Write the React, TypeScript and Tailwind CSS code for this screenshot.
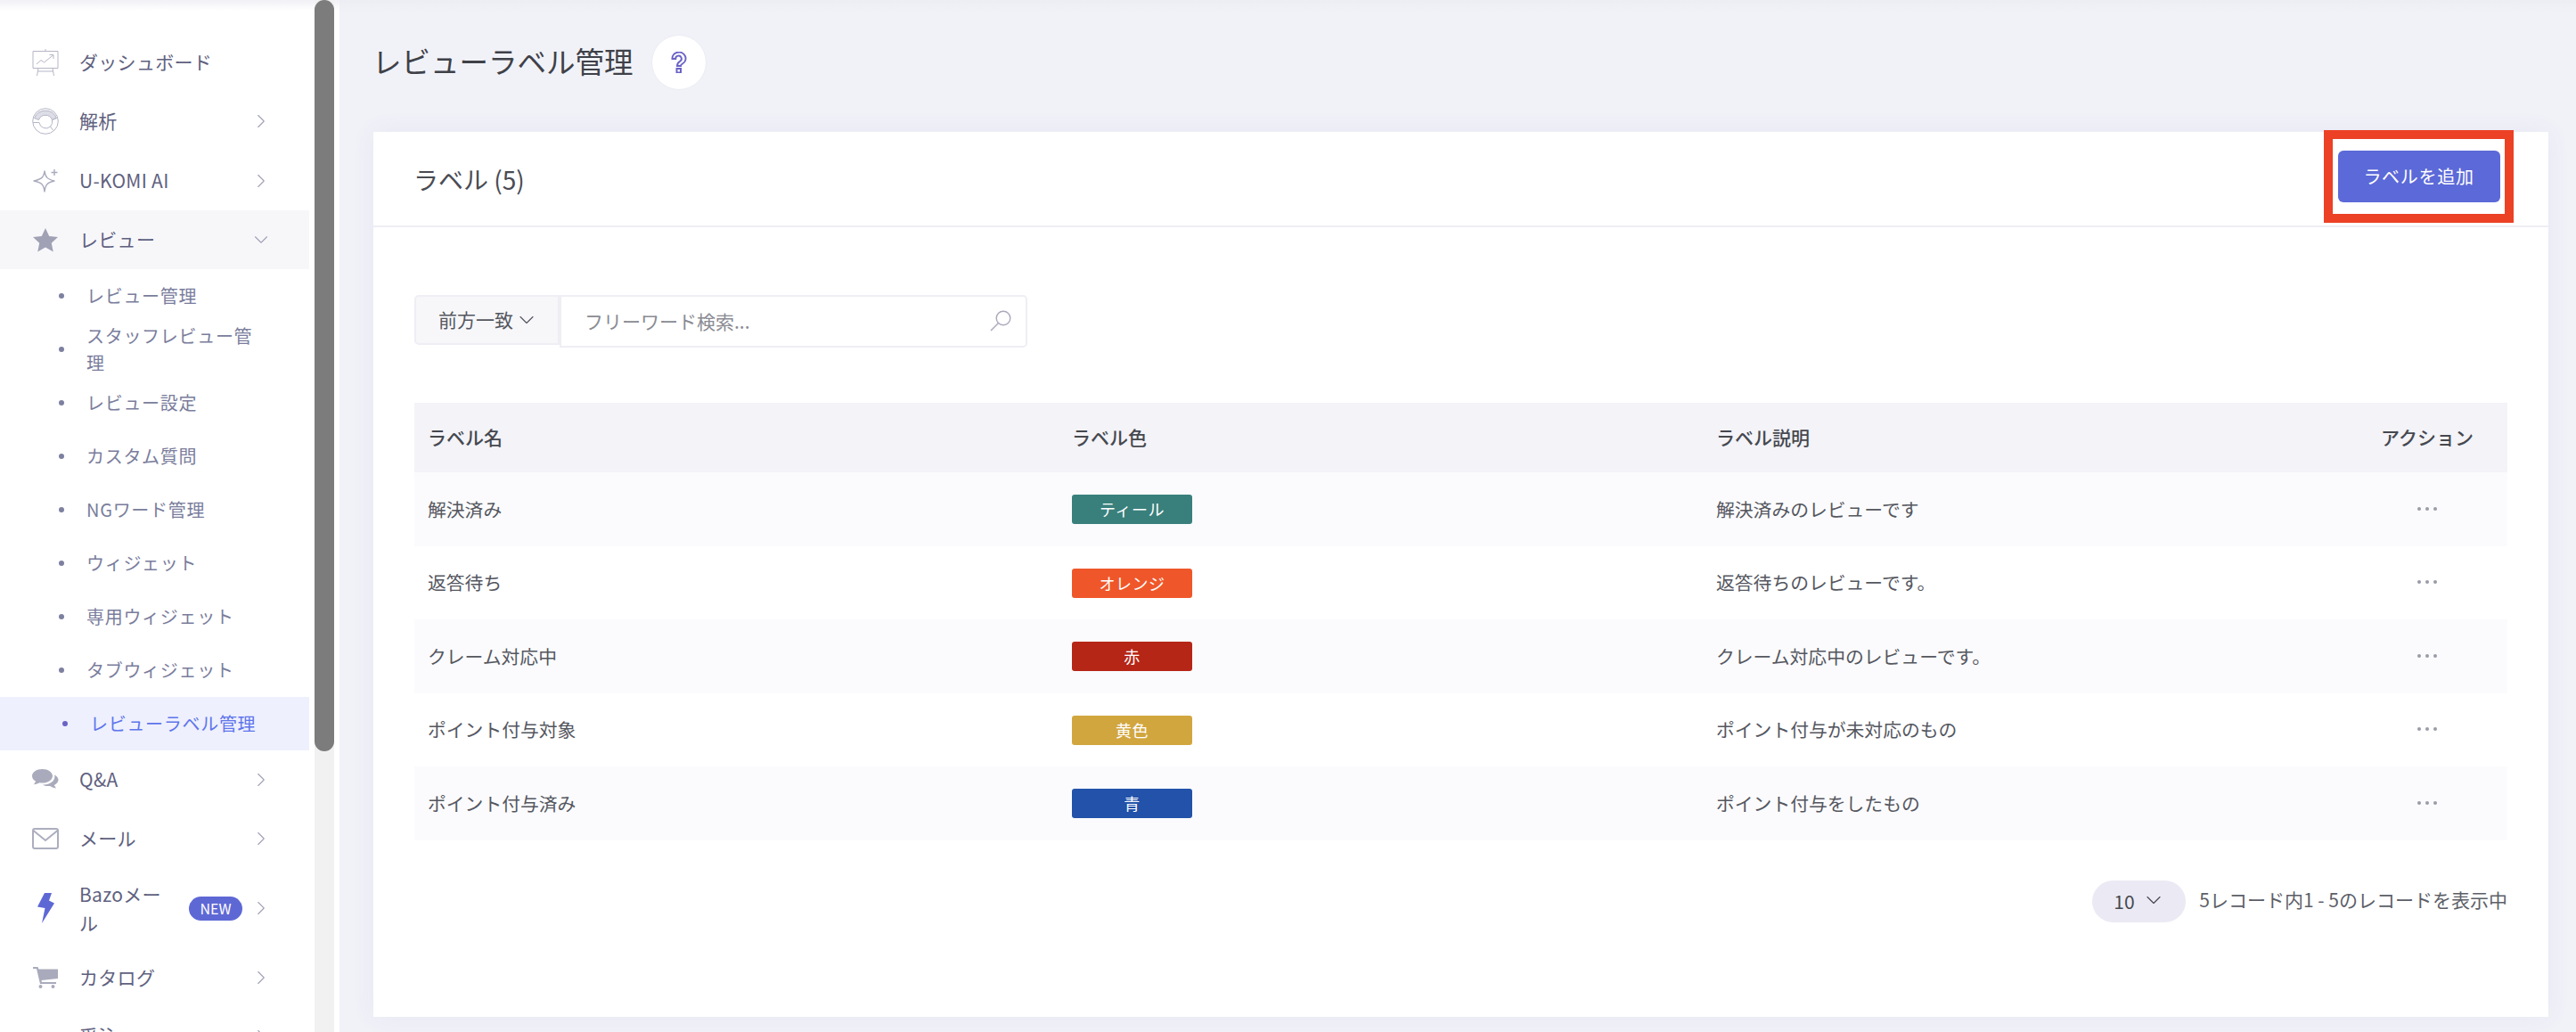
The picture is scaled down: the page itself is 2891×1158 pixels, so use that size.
import React from "react";
import { ChevronRight, ChevronDown } from "lucide-react";

const FONT = "font-['Noto_Sans_CJK_JP','Noto_Sans',sans-serif]";

function Dash() {
  return (
    <svg width="30" height="30" viewBox="0 0 30 30" fill="none" stroke="#b5b6c6" strokeWidth="1">
      <path d="M1 2.500h28v19H1z" />
      <path d="M15 0v2.500" />
      <path d="M5 17l5-4.500 3.500 2.500 10-8" />
      <path d="M19.500 6.500h4.500V11" />
      <path d="M7 21.500L5.500 30M23 21.500l1.500 8.500M6.500 25h17" />
    </svg>
  );
}
function Ring() {
  return (
    <svg width="30" height="30" viewBox="0 0 30 30" fill="none" stroke="#b5b6c6" strokeWidth="1">
      <path d="M2.500 11.500A13.500 13.500 0 0 1 27.500 11.500L22.500 13.500A8 8 0 0 0 7.500 13.500Z" fill="#dcdde6" />
      <circle cx="15" cy="15" r="14.300" />
      <path d="M22.500 13.500L27.500 11.500M22.500 13.500A8 8 0 0 1 20.500 21L23.500 25" />
      <path d="M1 16.500h7a7.500 7.500 0 0 0 12.500 4.500" />
    </svg>
  );
}
function Sparkle() {
  return (
    <svg width="28" height="28" viewBox="0 0 28 28" fill="none" stroke="#a9aabc" strokeWidth="1.400" strokeLinejoin="round">
      <path d="M13 3c1 7 3 9 11 11-8 2-10 4-11 12-1-8-3-10-12-12 9-2 11-4 12-11z" />
      <path d="M24 1v7M20.500 4.500h7" />
    </svg>
  );
}
function Star() {
  return (
    <svg width="28" height="27" viewBox="0 0 24 23" fill="#a0a1b5">
      <path d="M12 0l3.600 7.600 8.400 1-6.200 5.700 1.700 8.300L12 18.400 4.500 22.600l1.700-8.300L0 8.600l8.400-1z" />
    </svg>
  );
}
function Chat() {
  return (
    <svg width="30" height="24" viewBox="0 0 30 24" fill="#a9abbc">
      <path d="M11.500 0C5 0 0 3.400 0 7.800c0 2.500 1.600 4.600 4.100 6L2 17.300c2.400-.3 4.700-1 6.400-2 1 .2 2 .3 3.100.3 6.400 0 11.500-3.400 11.500-7.800S17.900 0 11.500 0z" />
      <path d="M25 6.500c.3.700.4 1.400.4 2.100 0 5-5.400 8.700-12 9-.5 0-1 .1-1.500 0 1.600 1 3.700 1.500 6 1.500.8 0 1.600-.1 2.300-.2 1.500 1.100 3.400 1.900 6.800 2.600l-2.200-3.600c3-1.300 4.700-3.400 4.700-5.800 0-2.300-1.700-4.300-4.500-5.600z" />
    </svg>
  );
}
function Mail() {
  return (
    <svg width="30" height="24" viewBox="0 0 30 24" fill="none" stroke="#acaebf" strokeWidth="2">
      <rect x="1" y="1" width="28" height="22" rx="2" />
      <path d="M1.500 3L15 14 28.500 3" />
    </svg>
  );
}
function Bolt() {
  return (
    <svg width="19" height="34" viewBox="0 0 19 34" fill="#5e68d5">
      <path d="M8 0h8l-3 8.500 6 3L5 34l3.500-17L0 15.500z" />
    </svg>
  );
}
function Cart() {
  return (
    <svg width="28" height="24" viewBox="0 0 28 24" fill="#a9abbc">
      <path d="M0 0h5.500l1 2.500H28v10.500l-18.500 2 .4 2H26v2H8L4 2H0z" />
      <circle cx="8.500" cy="22" r="2" />
      <circle cx="22.500" cy="22" r="2" />
    </svg>
  );
}
function Order() {
  return (
    <svg width="30" height="20" viewBox="0 0 30 20" fill="#a9abbc" className="mb-[-10px]">
      <path d="M7 0h16l5 6H2z" />
      <path d="M0 7h30v13H0z" />
    </svg>
  );
}

function MainItem({ icon, label, chevron = "right", badge, twoLine = false, bg = "", h = "h-[66px]" }: { icon: React.ReactNode; label: string; chevron?: "right" | "down" | "none"; badge?: boolean; twoLine?: boolean; bg?: string; h?: string }) {
  return (
    <div className={`flex items-center ${h} ${bg}`}>
      <div className="w-[36px] ml-[33px] mr-[20px] flex justify-center shrink-0">{icon}</div>
      <div className={`${twoLine ? "w-[96px] leading-[32px]" : "flex-1"} text-[21px] text-[#5f6180] tracking-[0.3px] shrink-0`}>{label}</div>
      {twoLine && <div className="flex-1" />}
      {badge && (
        <div className="w-[60px] h-[27px] rounded-full bg-[#5e68d5] text-white text-[16px] flex items-center justify-center mr-[11px] shrink-0">NEW</div>
      )}
      <div className="w-[20px] mr-[44px] flex justify-center shrink-0">
        {chevron === "right" && <ChevronRight size={26} strokeWidth={1} color="#a0a1b5" className="shrink-0" />}
        {chevron === "down" && <ChevronDown size={26} strokeWidth={1} color="#a0a1b5" className="shrink-0" />}
      </div>
    </div>
  );
}

function SubItem({ label, active = false }: { label: string; active?: boolean }) {
  return (
    <div className={`flex items-center h-[60px] ${active ? "bg-[#eef0fd] pl-[70px]" : "pl-[66px]"}`}>
      <div className={`w-[6px] h-[6px] rounded-full shrink-0 ${active ? "bg-[#6a63c6]" : "bg-[#7d809f]"}`} />
      <div className={`ml-[25px] w-[200px] text-[20px] leading-[30px] tracking-[0.7px] ${active ? "text-[#5f75ec]" : "text-[#7a7d9c]"}`}>{label}</div>
    </div>
  );
}

const rows = [
  { name: "解決済み", color: "ティール", bg: "bg-[#39807c]", desc: "解決済みのレビューです", h: "h-[83px]" },
  { name: "返答待ち", color: "オレンジ", bg: "bg-[#ef572a]", desc: "返答待ちのレビューです。", h: "h-[82px]" },
  { name: "クレーム対応中", color: "赤", bg: "bg-[#b62617]", desc: "クレーム対応中のレビューです。", h: "h-[83px]" },
  { name: "ポイント付与対象", color: "黄色", bg: "bg-[#d2a63f]", desc: "ポイント付与が未対応のもの", h: "h-[82px]" },
  { name: "ポイント付与済み", color: "青", bg: "bg-[#2252a9]", desc: "ポイント付与をしたもの", h: "h-[83px]" },
];

export default function App() {
  return (
    <div className={`${FONT} flex w-[2891px] h-[1158px] overflow-hidden bg-[#f1f2f8]`}>
      {/* Sidebar */}
      <aside className="w-[381px] h-full bg-white flex shrink-0 relative">
        <div className="absolute left-0 top-0 w-full h-[12px] bg-gradient-to-b from-[#f1f1f6] to-white pointer-events-none" />
        <div className="w-[347px] pt-[37px] shrink-0 h-full overflow-hidden relative">
          <MainItem icon={<Dash />} label="ダッシュボード" chevron="none" />
          <MainItem icon={<Ring />} label="解析" />
          <MainItem icon={<Sparkle />} label="U-KOMI AI" h="h-[67px]" />
          <MainItem icon={<Star />} label="レビュー" chevron="down" bg="bg-[#f7f7fa]" />
          <SubItem label="レビュー管理" />
          <SubItem label="スタッフレビュー管理" />
          <SubItem label="レビュー設定" />
          <SubItem label="カスタム質問" />
          <SubItem label="NGワード管理" />
          <SubItem label="ウィジェット" />
          <SubItem label="専用ウィジェット" />
          <SubItem label="タブウィジェット" />
          <SubItem label="レビューラベル管理" active />
          <MainItem icon={<Chat />} label="Q&A" />
          <MainItem icon={<Mail />} label="メール" />
          <MainItem icon={<Bolt />} label="Bazoメール" badge twoLine h="h-[90px]" />
          <MainItem icon={<Cart />} label="カタログ" />
          <MainItem icon={<Order />} label="受注" />
        </div>
        <div className="w-[6px] shrink-0" />
        <div className="w-[22px] h-full bg-[#f1f1f1] shrink-0 relative">
          <div className="h-[843px] w-full bg-[#7c7c7c] rounded-[11px]" />
        </div>
        <div className="w-[6px] shrink-0" />
      </aside>

      {/* Main */}
      <main className="flex-1 h-full flex flex-col min-w-0 pl-[38px] pr-[31px] relative">
        <div className="absolute left-0 top-0 w-full h-[14px] bg-gradient-to-b from-[#edeef4] to-[#f1f2f8] pointer-events-none" />
        <div className="h-[148px] flex items-center shrink-0 pb-[8px] relative">
          <h1 className="text-[32.500px] text-[#3f4148] font-normal leading-none -ml-[1px] -mt-[3px]">レビューラベル管理</h1>
          <div className="ml-[20px] w-[62px] h-[62px] rounded-full bg-white border border-[#ecedf4] flex items-center justify-center shrink-0">
            <svg width="18" height="24" viewBox="0 0 18 24" fill="none" stroke="#6a63c6" strokeWidth="2">
              <path d="M1.500 8a7.500 7 0 1 1 11.500 5.500c-1.500.9-2 1.500-2 2.500H7c0-2.500 1-4 3-5.200a3.300 3.300 0 1 0-4.800-2.800z" />
              <rect x="6.500" y="19" width="4.500" height="4.500" />
            </svg>
          </div>
        </div>

        <section className="w-[2441px] h-[993px] bg-white shrink-0 shadow-[0_0_24px_rgba(90,90,170,0.08)] flex flex-col">
          <div className="h-[107px] border-b-2 border-[#eeeef4] flex items-center justify-between pl-[45px] pr-[39px] shrink-0 relative">
            <div className="text-[28px] text-[#4a4c53] leading-none">ラベル (5)</div>
            <div className="border-[10px] border-[#ec4125] w-[213px] h-[104px] flex items-center justify-center absolute right-[39px] -top-[2px]">
              <button className="w-[182px] h-[58px] rounded-[6px] bg-[#5c69d8] text-white text-[20px] tracking-[0.7px]">ラベルを追加</button>
            </div>
          </div>

          <div className="pl-[46px] pr-[46px] flex-1 flex flex-col">
            <div className="flex items-start mt-[76px] shrink-0">
              <div className="w-[163px] h-[56px] bg-[#f7f7fa] border-2 border-[#eeeef4] rounded-l-[5px] flex items-center pl-[25px] gap-[1px] text-[21px] text-[#55575f]">
                前方一致
                <ChevronDown size={28} strokeWidth={1} color="#55575f" className="shrink-0" />
              </div>
              <div className="w-[525px] h-[59px] border-2 border-[#eeeef4] rounded-r-[5px] flex items-center justify-between pl-[26px] pr-[16px] text-[21px] text-[#8a8b93]">
                フリーワード検索...
                <svg width="24" height="24" viewBox="0 0 24 24" fill="none" stroke="#a9a9bb" strokeWidth="1.400" className="shrink-0 -mt-[2px]">
                  <circle cx="15" cy="9" r="7.800" />
                  <path d="M9.500 14.500L1 23" />
                </svg>
              </div>
            </div>

            <div className="mt-[62px] shrink-0 w-[2349px]">
              <div className="grid grid-cols-[723px_723px_723px_180px] h-[78px] items-center bg-[#f3f3f8] text-[21px] font-medium text-[#46484f]">
                <div className="pl-[15px]">ラベル名</div>
                <div className="pl-[15px]">ラベル色</div>
                <div className="pl-[15px]">ラベル説明</div>
                <div className="text-center">アクション</div>
              </div>
              {rows.map((r, i) => (
                <div key={r.name} className={`grid grid-cols-[723px_723px_723px_180px] ${r.h} items-center text-[20.800px] text-[#55575f] ${i % 2 === 0 ? "bg-[#fbfbfd]" : "bg-white"}`}>
                  <div className="pl-[15px]">{r.name}</div>
                  <div className="pl-[15px]">
                    <div className={`w-[135px] h-[33px] rounded-[3px] ${r.bg} text-white text-[18px] flex items-center justify-center tracking-[0.5px]`}>{r.color}</div>
                  </div>
                  <div className="pl-[15px]">{r.desc}</div>
                  <div className="flex justify-center gap-[5px] -mt-[2px]">
                    <span className="w-[4px] h-[4px] rounded-full bg-[#9a9ba8]" />
                    <span className="w-[4px] h-[4px] rounded-full bg-[#9a9ba8]" />
                    <span className="w-[4px] h-[4px] rounded-full bg-[#9a9ba8]" />
                  </div>
                </div>
              ))}
            </div>

            <div className="flex items-center justify-end mt-[45px] w-[2349px] shrink-0">
              <div className="w-[105px] h-[47px] rounded-full bg-[#ebeaf4] flex items-center pl-[24px] gap-[7px] text-[21px] text-[#46484f]">
                10
                <ChevronDown size={28} strokeWidth={1} color="#46484f" className="shrink-0 -mt-[3px]" />
              </div>
              <div className="ml-[15px] text-[21px] text-[#5d5f68] -mt-[3px]">5レコード内1 - 5のレコードを表示中</div>
            </div>
          </div>
        </section>
      </main>
    </div>
  );
}
